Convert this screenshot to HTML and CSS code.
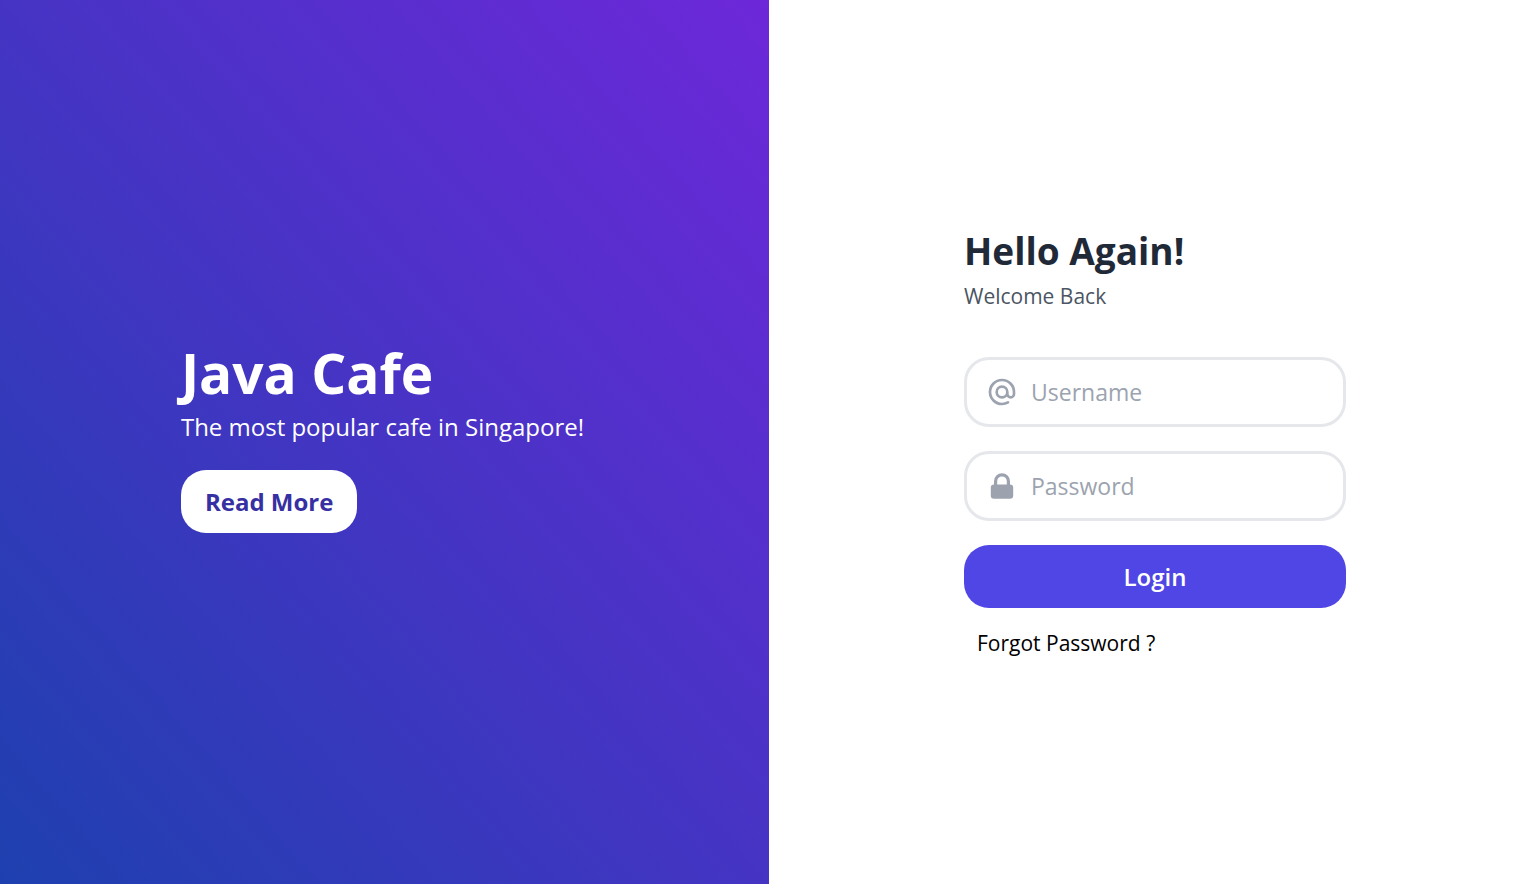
FILE: index.html
```html
<!DOCTYPE html>
<html lang="en">
<head>
<meta charset="utf-8">
<meta name="viewport" content="width=device-width, initial-scale=1">
<title>Java Cafe</title>
<link rel="stylesheet" href="styles.css">
</head>
<body>
<main class="page">
  <section class="hero">
    <div class="hero-content">
      <h1 class="hero-title">Java Cafe</h1>
      <p class="hero-text">The most popular cafe in Singapore!</p>
      <button class="read-more" type="button">Read More</button>
    </div>
  </section>
  <section class="panel">
    <form class="login-form">
      <h2 class="form-title">Hello Again!</h2>
      <p class="form-subtitle">Welcome Back</p>
      <label class="field">
        <svg class="field-icon" viewBox="0 0 24 24" fill="none" stroke="currentColor" stroke-width="2" stroke-linecap="round" stroke-linejoin="round" aria-hidden="true"><path d="M16 12a4 4 0 10-8 0 4 4 0 008 0zm0 0v1.500a2.500 2.500 0 005 0V12a9 9 0 10-9 9m4.500-1.206a8.959 8.959 0 01-4.500 1.207"/></svg>
        <input class="field-input" type="text" name="username" placeholder="Username" aria-label="Username">
      </label>
      <label class="field">
        <svg class="field-icon" viewBox="0 0 20 20" fill="currentColor" aria-hidden="true"><path fill-rule="evenodd" d="M5 9V7a5 5 0 0110 0v2a2 2 0 012 2v5a2 2 0 01-2 2H5a2 2 0 01-2-2v-5a2 2 0 012-2zm8-2v2H7V7a3 3 0 016 0z" clip-rule="evenodd"/></svg>
        <input class="field-input" type="password" name="password" placeholder="Password" aria-label="Password">
      </label>
      <button class="login-button" type="submit">Login</button>
      <a class="forgot" href="#">Forgot Password ?</a>
    </form>
  </section>
</main>
</body>
</html>
```
FILE: styles.css
```css
* {
  box-sizing: border-box;
}

body {
  margin: 0;
  font-family: "Segoe UI", "Open Sans", "Noto Sans", sans-serif;
  background: #fff;
}

h1, h2, p {
  margin: 0;
}

button, input {
  font-family: inherit;
}

.page {
  display: grid;
  grid-template-columns: 769fr 759fr;
  min-height: 100vh;
}

.hero {
  display: flex;
  align-items: center;
  justify-content: center;
  padding-right: 4px;
  background: linear-gradient(to top right, #1e40af, #6d28d9);
  color: #fff;
}

.hero-title {
  font-size: 55px;
  line-height: 60px;
  font-weight: 700;
}

.hero-text {
  margin-top: 5px;
  font-size: 24px;
  line-height: 38px;
}

.read-more {
  margin: 24px 0 9px;
  padding: 12px 24px;
  border: 0;
  border-radius: 25px;
  background: #fff;
  color: #3730a3;
  font-size: 24px;
  line-height: 39px;
  font-weight: 700;
}

.panel {
  display: flex;
  align-items: center;
  justify-content: center;
  padding-left: 13px;
}

.login-form {
  display: flex;
  flex-direction: column;
  width: 382px;
}

.form-title {
  font-size: 37px;
  line-height: 50px;
  font-weight: 700;
  color: #1f2937;
}

.form-subtitle {
  margin-bottom: 41px;
  font-size: 21px;
  line-height: 40px;
  color: #4b5563;
}

.field {
  display: flex;
  align-items: center;
  gap: 13px;
  margin-bottom: 24px;
  padding: 12px 19px;
  border: 3px solid #e5e7eb;
  border-radius: 25px;
  color: #9ca3af;
}

.field-icon {
  flex: none;
  width: 32px;
  height: 32px;
}

.field-input {
  flex: 1;
  min-width: 0;
  height: 40px;
  padding: 0;
  border: 0;
  outline: none;
  background: transparent;
  color: #1f2937;
  font-size: 23px;
}

.field-input::placeholder {
  color: #9ca3af;
}

.login-button {
  padding: 12px;
  border: 0;
  border-radius: 25px;
  background: #4f46e5;
  color: #fff;
  font-size: 24px;
  line-height: 39px;
  font-weight: 600;
}

.forgot {
  align-self: flex-start;
  margin: 20px 0 0 13px;
  font-size: 21px;
  line-height: 31px;
  color: #000;
  text-decoration: none;
}
```
